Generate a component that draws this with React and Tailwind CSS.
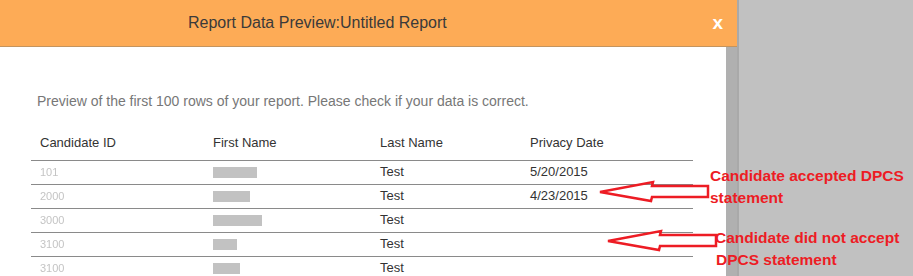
import React from "react";

const ROWS = [
  { id: "101", nameW: "w-[44px]", last: "Test", date: "5/20/2015" },
  { id: "2000", nameW: "w-[37px]", last: "Test", date: "4/23/2015" },
  { id: "3000", nameW: "w-[49px]", last: "Test", date: "" },
  { id: "3100", nameW: "w-[24px]", last: "Test", date: "" },
  { id: "3100", nameW: "w-[27px]", last: "Test", date: "" },
];

const Arrow = ({ className }) => (
  <svg className={className} width="116" height="24" viewBox="0 0 116 24" fill="none">
    <polygon
      points="2,12 55,2 54,6 110,6 110,17 54,17 53,21"
      stroke="#ed1c24"
      strokeWidth="2.5"
      strokeLinejoin="miter"
      fill="none"
    />
  </svg>
);

export default function App() {
  return (
    <div className="relative h-[276px] w-[913px] overflow-hidden bg-[#c1c1c1] font-['Liberation_Sans',Arial,sans-serif]">
      <div className="flex h-full w-[739px] flex-col border-r-2 border-[#a9a9a9]">
        <div className="flex h-[47px] shrink-0 items-center border-b border-[#c4945e] bg-[#fdab56]">
          <h1 className="flex-1 pl-[188px] text-[16px] text-[#3a3a3a]">
            Report Data Preview:Untitled Report
          </h1>
          <button className="mr-[14px] mb-[1px] text-[19px] font-bold leading-none text-white">x</button>
        </div>

        <div className="flex flex-1">
          <div className="flex-1 bg-white pl-[31px] pt-[44px]">
            <p className="pl-[6px] text-[14px] leading-[20px] text-[#777]">
              Preview of the first 100 rows of your report. Please check if your data is correct.
            </p>

            <table className="mt-[5px] w-[662px] border-collapse text-[13px] text-[#333]">
              <thead>
                <tr className="h-[44px] border-b border-[#8a8a8a]">
                  <th className="w-[173px] pl-[9px] pt-[10px] text-left font-normal">Candidate ID</th>
                  <th className="w-[167px] pl-[9px] pt-[10px] text-left font-normal">First Name</th>
                  <th className="w-[150px] pl-[9px] pt-[10px] text-left font-normal">Last Name</th>
                  <th className="pl-[9px] pt-[10px] text-left font-normal">Privacy Date</th>
                </tr>
              </thead>
              <tbody>
                {ROWS.map((r, i) => (
                  <tr key={i} className="h-[24px] border-b border-[#8a8a8a]">
                    <td className="pl-[9px]">
                      <span className="text-[11px] text-[#c4c4c4] blur-[0.7px]">{r.id}</span>
                    </td>
                    <td className="pl-[9px]">
                      <div className={`h-[11px] ${r.nameW} bg-[#c2c2c2]`} />
                    </td>
                    <td className="pl-[9px]">{r.last}</td>
                    <td className="pl-[9px]">{r.date}</td>
                  </tr>
                ))}
              </tbody>
            </table>
          </div>
          <div className="w-[11px] bg-[#b0b0b0]" />
        </div>
      </div>

      <Arrow className="absolute left-[598px] top-[180px]" />
      <Arrow className="absolute left-[606px] top-[229px]" />

      <div className="absolute left-[710px] top-[165px] text-[15.5px] font-bold leading-[22px] text-[#ed1c24]">
        Candidate accepted DPCS
        <br />
        statement
      </div>
      <div className="absolute left-[715px] top-[227px] text-[15.5px] font-bold leading-[22px] text-[#ed1c24]">
        Candidate did not accept
        <br />
        <span className="pl-[1px]">DPCS statement</span>
      </div>
    </div>
  );
}
